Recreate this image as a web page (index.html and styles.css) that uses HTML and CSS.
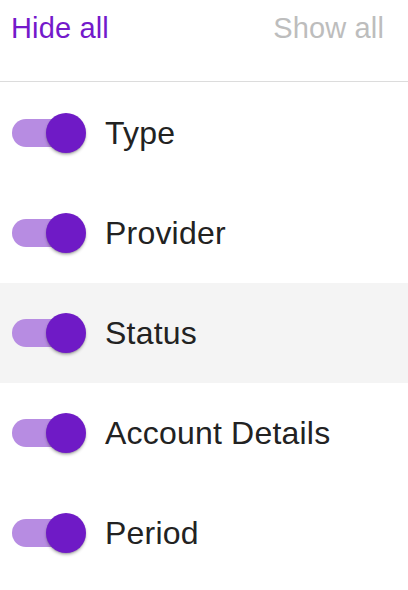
FILE: index.html
```
<!DOCTYPE html>
<html>
<head>
<meta charset="utf-8">
<link rel="stylesheet" href="styles.css">
</head>
<body>
<div class="header">
  <span class="hide">Hide all</span>
  <span class="show">Show all</span>
</div>
<div class="list">
  <div class="row"><span class="switch"><span class="track"></span><span class="thumb"></span></span><span class="label">Type</span></div>
  <div class="row"><span class="switch"><span class="track"></span><span class="thumb"></span></span><span class="label">Provider</span></div>
  <div class="row active"><span class="switch"><span class="track"></span><span class="thumb"></span></span><span class="label">Status</span></div>
  <div class="row"><span class="switch"><span class="track"></span><span class="thumb"></span></span><span class="label">Account Details</span></div>
  <div class="row"><span class="switch"><span class="track"></span><span class="thumb"></span></span><span class="label">Period</span></div>
</div>
</body>
</html>
```
FILE: styles.css
```
html, body {
  margin: 0;
  padding: 0;
  background: #fff;
  font-family: "Liberation Sans", Arial, sans-serif;
}
.header {
  display: flex;
  justify-content: space-between;
  align-items: flex-start;
  padding: 10px 24px 0 11px;
  box-sizing: border-box;
  height: 82px;
  border-bottom: 1px solid #dcdcdc;
  margin-bottom: 1px;
  font-size: 29px;
  line-height: 36px;
  letter-spacing: 0.15px;
}
.hide { color: #7419cb; }
.show { color: #bdbdbd; }
.row {
  height: 100px;
  display: flex;
  align-items: center;
  padding-left: 12px;
}
.row.active { background: #f4f4f4; }
.switch {
  display: flex;
  align-items: center;
  width: 74px;
  height: 40px;
  margin-right: 19px;
}
.track {
  display: block;
  width: 68px;
  height: 28px;
  border-radius: 14px;
  background: #b78ce2;
  flex: none;
}
.thumb {
  display: block;
  width: 40px;
  height: 40px;
  border-radius: 50%;
  background: #6f1ac6;
  margin-left: -34px;
  flex: none;
  box-shadow: 0 2px 3px rgba(0,0,0,0.25), 0 1px 1px rgba(0,0,0,0.12);
}
.label {
  font-size: 32px;
  letter-spacing: 0.2px;
  color: #222;
}
```
